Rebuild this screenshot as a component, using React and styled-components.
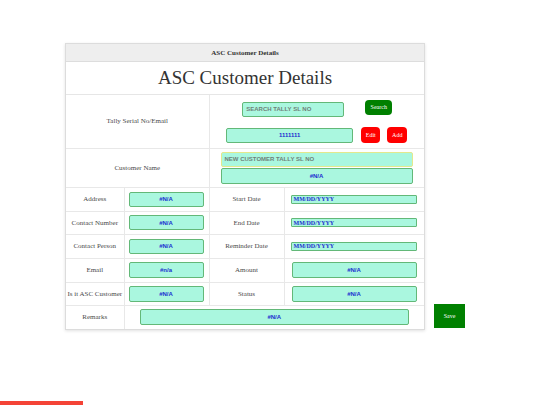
import React from "react";
import styled, { createGlobalStyle } from "styled-components";

const Global = createGlobalStyle`
  html, body { margin: 0; padding: 0; background: #fff; }
  body { font-family: "Liberation Serif", "Times New Roman", serif; width: 540px; height: 405px; overflow: hidden; }
`;

const Page = styled.div`
  display: flex;
  align-items: flex-end;
  gap: 9px;
  padding: 43px 0 0 65px;
`;

const Card = styled.div`
  width: 358px;
  border: 1px solid #dcdcdc;
  box-shadow: 0 1px 3px rgba(0,0,0,0.12);
  background: #fff;
`;

const HeaderBar = styled.div`
  height: 17px;
  background: #eeeeee;
  border-bottom: 1px solid #dddddd;
  display: flex;
  align-items: center;
  justify-content: center;
  font-size: 7px;
  font-weight: bold;
  color: #333;
`;

const Title = styled.h1`
  margin: 0;
  height: 33px;
  display: flex;
  align-items: center;
  justify-content: center;
  font-size: 19px;
  font-weight: normal;
  color: #333;
  border-bottom: 1px solid #e6e6e6;
  box-sizing: border-box;
`;

const Table = styled.table`
  width: 358px;
  border-collapse: collapse;
  table-layout: fixed;
  & tbody > tr + tr > td { border-top: 1px solid #e8e8e8; }
`;

const Row = styled.tr`
  height: ${p => p.$h}px;
`;

const Label = styled.td`
  font-size: 7px;
  color: #4a4a4a;
  text-align: center;
  vertical-align: middle;
  padding: 0;
  border-right: 1px solid #e8e8e8;
  &:last-child { border-right: none; }
`;

const Cell = styled.td`
  padding: 0;
  vertical-align: middle;
  border-right: 1px solid #e8e8e8;
  &:last-child { border-right: none; }
`;

const CellInner = styled.div`
  display: flex;
  justify-content: ${p => p.$justify || "flex-start"};
  padding: ${p => p.$pad || "0"};
`;

const Field = styled.div`
  box-sizing: border-box;
  width: ${p => p.$w}px;
  height: ${p => p.$h || 15}px;
  background: #aaf7df;
  border: 1.5px solid ${p => (p.$yellow ? "#e4e98c" : "#63b878")};
  border-radius: 2px;
  display: flex;
  align-items: center;
  justify-content: ${p => (p.$left ? "flex-start" : "center")};
  padding: 0 ${p => (p.$left ? 3 : 0)}px;
  font-family: "Liberation Sans", Arial, sans-serif;
  font-size: 6px;
  font-weight: bold;
  color: ${p => (p.$placeholder ? "#6f7f78" : "#1b2fd0")};
`;

const DateField = styled(Field)`
  height: 9px;
  border-width: 1px;
  border-radius: 1px;
  font-family: "Liberation Serif", "Times New Roman", serif;
  font-size: 6px;
  padding: 0 2px;
  color: #1b2fd0;
`;

const Btn = styled.div`
  box-sizing: border-box;
  width: ${p => p.$w}px;
  height: ${p => p.$h}px;
  background: ${p => p.$bg};
  color: #fff;
  border-radius: ${p => p.$r ?? 3}px;
  display: flex;
  align-items: center;
  justify-content: center;
  font-size: 6px;
`;

const Stack = styled.div`
  display: flex;
  flex-direction: column;
  align-items: ${p => p.$align || "center"};
  gap: ${p => p.$gap}px;
  padding: ${p => p.$pad || "0"};
`;

const Line = styled.div`
  display: flex;
  align-items: ${p => p.$align || "center"};
  gap: ${p => p.$gap}px;
  margin-left: ${p => p.$ml || 0}px;
`;

const SearchSlot = styled.div`
  padding-top: 2px;
`;

const SaveWrap = styled.div`
  margin-bottom: 2px;
`;

const RedBar = styled.div`
  position: fixed;
  left: 0;
  bottom: 0;
  width: 83px;
  height: 4px;
  background: #f44336;
`;

const pairs = [
  ["Address", "#N/A", "Start Date", "date"],
  ["Contact Number", "#N/A", "End Date", "date"],
  ["Contact Person", "#N/A", "Reminder Date", "date"],
  ["Email", "#n/a", "Amount", "#N/A"],
  ["Is it ASC Customer", "#N/A", "Status", "#N/A"],
];
const heights = [24, 23, 24, 24, 23];

export default function App() {
  return (
    <>
      <Global />
      <Page>
        <Card>
          <HeaderBar>ASC Customer Details</HeaderBar>
          <Title>ASC Customer Details</Title>
          <Table>
            <colgroup>
              <col style={{ width: 58 }} />
              <col style={{ width: 85 }} />
              <col style={{ width: 75 }} />
              <col style={{ width: 140 }} />
            </colgroup>
            <tbody>
              <Row $h={53}>
                <Label colSpan={2}>Tally Serial No/Email</Label>
                <Cell colSpan={2}>
                  <Stack $gap={10}>
                    <Line $gap={21} $align="flex-start" $ml={1}>
                      <SearchSlot>
                        <Field $w={102} $left $placeholder>SEARCH TALLY SL NO</Field>
                      </SearchSlot>
                      <Btn $w={27} $h={15} $bg="#008000" $r={4}>Search</Btn>
                    </Line>
                    <Line $gap={8} $align="flex-end">
                      <Field $w={127}>1111111</Field>
                      <Line $gap={7}>
                        <Btn $w={19} $h={16} $bg="#ff0000" $r={4}>Edit</Btn>
                        <Btn $w={20} $h={16} $bg="#ff0000" $r={4}>Add</Btn>
                      </Line>
                    </Line>
                  </Stack>
                </Cell>
              </Row>
              <Row $h={39}>
                <Label colSpan={2}>Customer Name</Label>
                <Cell colSpan={2}>
                  <Stack $gap={1} $align="flex-start" $pad="0 0 0 11px">
                    <Field $w={192} $left $placeholder $yellow>NEW CUSTOMER TALLY SL NO</Field>
                    <Field $w={192} $h={16}>#N/A</Field>
                  </Stack>
                </Cell>
              </Row>
              {pairs.map(([l1, v1, l2, v2], i) => (
                <Row key={l1} $h={heights[i]}>
                  <Label>{l1}</Label>
                  <Cell>
                    <CellInner $pad="0 0 0 4px">
                      <Field $w={75} $h={i === 3 || i === 4 ? 16 : 15}>{v1}</Field>
                    </CellInner>
                  </Cell>
                  <Label>{l2}</Label>
                  <Cell>
                    <CellInner $pad={v2 === "date" ? "0 0 0 6px" : "0 0 0 7px"}>
                      {v2 === "date" ? (
                        <DateField $w={126} $left>MM/DD/YYYY</DateField>
                      ) : (
                        <Field $w={125} $h={16}>{v2}</Field>
                      )}
                    </CellInner>
                  </Cell>
                </Row>
              ))}
              <Row $h={24}>
                <Label>Remarks</Label>
                <Cell colSpan={3}>
                  <CellInner $justify="center">
                    <Field $w={269} $h={16}>#N/A</Field>
                  </CellInner>
                </Cell>
              </Row>
            </tbody>
          </Table>
        </Card>
        <SaveWrap>
          <Btn $w={31} $h={24} $bg="#008000" $r={0}>Save</Btn>
        </SaveWrap>
      </Page>
      <RedBar />
    </>
  );
}
